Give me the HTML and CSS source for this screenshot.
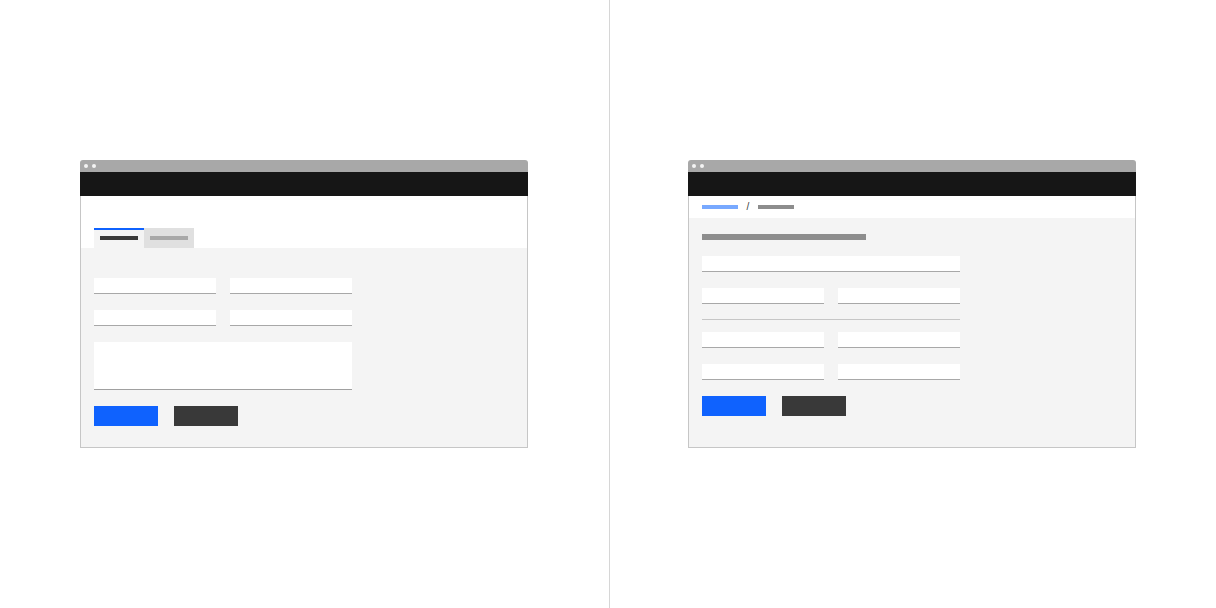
FILE: index.html
```html
<!DOCTYPE html>
<html lang="en">
<head>
<meta charset="utf-8">
<title>Form patterns</title>
<link rel="stylesheet" href="styles.css">
</head>
<body>
<main class="page">
  <section class="half half-left">
    <div class="window">
      <div class="titlebar"><span class="dot"></span><span class="dot"></span></div>
      <div class="navbar"></div>
      <div class="tabs-head">
        <div class="tab tab-active"><span class="bar bar-dark"></span></div>
        <div class="tab tab-idle"><span class="bar bar-light"></span></div>
      </div>
      <div class="content content-left">
        <div class="row">
          <div class="field"></div>
          <div class="field"></div>
        </div>
        <div class="row">
          <div class="field"></div>
          <div class="field"></div>
        </div>
        <div class="field textarea"></div>
        <div class="actions">
          <div class="btn btn-primary"></div>
          <div class="btn btn-secondary"></div>
        </div>
      </div>
    </div>
  </section>
  <section class="half half-right">
    <div class="window">
      <div class="titlebar"><span class="dot"></span><span class="dot"></span></div>
      <div class="navbar"></div>
      <div class="crumbs">
        <span class="crumb crumb-link"></span>
        <span class="slash">/</span>
        <span class="crumb crumb-current"></span>
      </div>
      <div class="content content-right">
        <div class="heading"></div>
        <div class="field field-wide"></div>
        <div class="row row-gap">
          <div class="field"></div>
          <div class="field"></div>
        </div>
        <div class="divider"></div>
        <div class="row">
          <div class="field"></div>
          <div class="field"></div>
        </div>
        <div class="row">
          <div class="field"></div>
          <div class="field"></div>
        </div>
        <div class="actions">
          <div class="btn btn-primary"></div>
          <div class="btn btn-secondary"></div>
        </div>
      </div>
    </div>
  </section>
</main>
</body>
</html>
```
FILE: styles.css
```css
* { box-sizing: border-box; }
html, body {
  margin: 0;
  padding: 0;
  background: #ffffff;
  font-family: "Liberation Sans", Arial, sans-serif;
}
.page {
  display: grid;
  grid-template-columns: 608px 608px;
  height: 608px;
  position: relative;
}
.page::after {
  content: "";
  position: absolute;
  left: 609px;
  top: 0;
  width: 1px;
  height: 608px;
  background: #d6d6d6;
}
.half {
  display: flex;
  align-items: center;
  justify-content: center;
}
.window {
  width: 448px;
  height: 288px;
  display: flex;
  flex-direction: column;
}
.titlebar {
  height: 12px;
  background: #a8a8a8;
  border-radius: 3px 3px 0 0;
  display: flex;
  align-items: center;
  gap: 4px;
  padding-left: 4px;
}
.dot {
  width: 4px;
  height: 4px;
  border-radius: 50%;
  background: #f4f4f4;
}
.navbar {
  height: 24px;
  background: #161616;
}
.tabs-head {
  height: 52px;
  background: #ffffff;
  border-left: 1px solid #c6c6c6;
  border-right: 1px solid #c6c6c6;
  display: flex;
  align-items: flex-end;
  padding-left: 13px;
}
.tab {
  width: 50px;
  height: 20px;
  display: flex;
  align-items: flex-start;
  justify-content: center;
  padding-top: 8px;
}
.tab-active {
  background: #f4f4f4;
  border-top: 2px solid #0f62fe;
  padding-top: 6px;
}
.tab-idle {
  background: #e0e0e0;
}
.bar {
  display: block;
  width: 38px;
  height: 4px;
}
.bar-dark { background: #393939; }
.bar-light { background: #a8a8a8; }
.content {
  flex: 1;
  background: #f4f4f4;
  border: 1px solid #c6c6c6;
  border-top: none;
  padding-left: 13px;
  display: flex;
  flex-direction: column;
}
.content-left {
  padding-top: 30px;
  gap: 16px;
}
.row {
  display: flex;
  gap: 14px;
}
.field {
  width: 122px;
  height: 16px;
  background: #ffffff;
  border-bottom: 1px solid #a8a8a8;
}
.field-wide { width: 258px; }
.textarea {
  width: 258px;
  height: 48px;
  border-bottom-color: #a0a0a0;
}
.actions {
  display: flex;
  gap: 16px;
}
.btn {
  width: 64px;
  height: 20px;
}
.btn-primary { background: #0f62fe; }
.btn-secondary { background: #393939; }
.crumbs {
  height: 22px;
  background: #ffffff;
  border-left: 1px solid #c6c6c6;
  border-right: 1px solid #c6c6c6;
  display: flex;
  align-items: center;
  padding-left: 13px;
}
.crumb {
  display: block;
  width: 36px;
  height: 4px;
}
.crumb-link { background: #78a9ff; }
.crumb-current { background: #8d8d8d; }
.slash {
  font-size: 10px;
  line-height: 10px;
  color: #393939;
  width: 20px;
  text-align: center;
}
.content-right {
  padding-top: 16px;
  gap: 16px;
}
.heading {
  width: 164px;
  height: 6px;
  background: #8d8d8d;
}
.divider {
  width: 258px;
  height: 1px;
  background: #c6c6c6;
  margin-top: -1px;
  margin-bottom: -4px;
}
```
